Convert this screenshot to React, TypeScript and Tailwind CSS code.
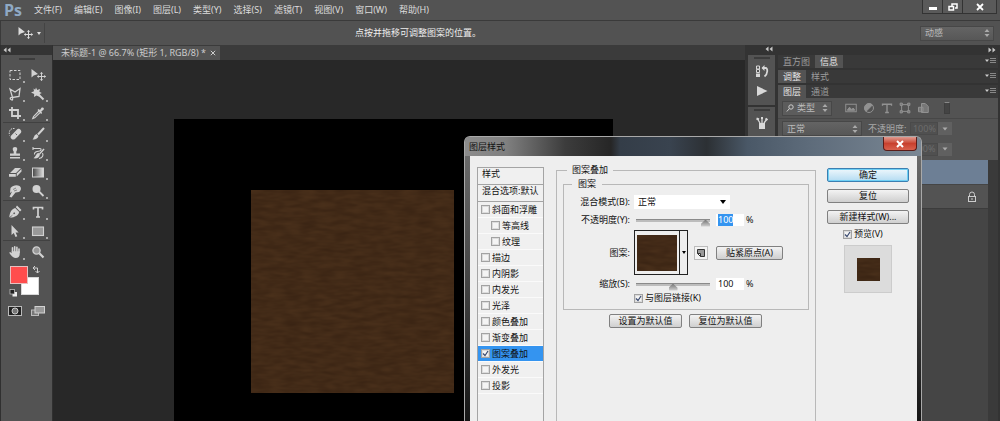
import { useState, type ReactNode } from 'react';
import clsx from 'clsx';

const MENUS = ['文件(F)', '编辑(E)', '图像(I)', '图层(L)', '类型(Y)', '选择(S)', '滤镜(T)', '视图(V)', '窗口(W)', '帮助(H)'];

interface StyleItem {
  label: string;
  child?: boolean;
  active?: boolean;
}

const STYLES: StyleItem[] = [
  { label: '斜面和浮雕' },
  { label: '等高线', child: true },
  { label: '纹理', child: true },
  { label: '描边' },
  { label: '内阴影' },
  { label: '内发光' },
  { label: '光泽' },
  { label: '颜色叠加' },
  { label: '渐变叠加' },
  { label: '图案叠加', active: true },
  { label: '外发光' },
  { label: '投影' },
];

function Svg({ children, className = 'size-4' }: { children: ReactNode; className?: string }) {
  return (
    <svg viewBox="0 0 16 16" className={className} fill="none" stroke="currentColor" strokeWidth="1.3" aria-hidden>
      {children}
    </svg>
  );
}

function MoveIcon() {
  return (
    <Svg>
      <path d="M1.500 2v8.500l2.200-2 4.300-1.500z" fill="currentColor" stroke="none" />
      <path d="M11.500 5.500v8M7.500 9.500h8" strokeWidth="1" />
      <path d="M10.200 6.800l1.300-1.500 1.300 1.500M10.200 12.200l1.300 1.500 1.300-1.500M8.800 8.200L7.300 9.500l1.500 1.300M14.200 8.200l1.500 1.300-1.500 1.300" strokeWidth=".8" />
    </Svg>
  );
}

// Toolbox, two tools per row, split in groups by a thin rule
const TOOL_GROUPS: { name: string; icon: ReactNode }[][] = [
  [
    { name: '矩形选框', icon: <Svg><rect x="3" y="3.500" width="10" height="9" strokeDasharray="2.500 1.500" strokeWidth="1" /></Svg> },
    { name: '移动', icon: <MoveIcon /> },
    {
      name: '多边形套索',
      icon: <Svg><path d="M3 3l5 3 5-3.500-1 8-6.500 1zM5.500 11.500c-2-.5-3 1-1.500 2s2 .5 1.500-2" /></Svg>,
    },
    {
      name: '魔棒',
      icon: (
        <Svg>
          <path d="M6 1.500l1.200 2.500L10 3l-.6 2.800 2.400 1.200-2.500 1.200.2 2.600L6.500 9.500 4 11l.2-3L1 6.500l3-1.200L3.500 2.500l1.700 1.200z" fill="currentColor" stroke="none" />
          <path d="M8 8l5.500 5.500" strokeWidth="2" />
        </Svg>
      ),
    },
    { name: '裁剪', icon: <Svg><path d="M5 2v9h9M2 5h9v9" strokeWidth="1.800" /></Svg> },
    {
      name: '吸管',
      icon: (
        <Svg>
          <path d="M9 6l-5.500 5.500-.8 2 2-.7L10.300 7.300" strokeWidth="1.100" />
          <path d="M7.500 5l1-1 1.500 1 1.700-2.400c1.800-.8 2.800.9 1.800 2.100L11.300 6.500l.8 1.500-1 1z" fill="currentColor" stroke="none" />
        </Svg>
      ),
    },
  ],
  [
    {
      name: '污点修复',
      icon: (
        <Svg>
          <path d="M10 3.500c1.500-2 5.500 1 4 3.300L8 13c-2.500 1.800-5.500-1-4-3.300z" fill="currentColor" stroke="none" />
          <path d="M7.500 2.500C3.500 2 1.500 5 2.500 9.500" strokeDasharray="1.500 1" strokeWidth="1" />
          <path d="M8.500 7.500l1.500 1.500" stroke="#666" strokeWidth="1" />
        </Svg>
      ),
    },
    {
      name: '画笔',
      icon: (
        <Svg>
          <path d="M14 2L8 8.500" strokeWidth="2" />
          <path d="M6.500 8l2 2c-.5 2.500-3 4-6 3.500 1.500-1 1-4 4-5.500z" fill="currentColor" stroke="none" />
        </Svg>
      ),
    },
    {
      name: '仿制图章',
      icon: (
        <Svg>
          <path d="M8 2c3 0 2.500 3 1.300 4.500V8.500H13v2.300H3V8.500h3.700V6.500C5.500 5 5 2 8 2zM3 12h10v1.500H3z" fill="currentColor" stroke="none" />
        </Svg>
      ),
    },
    {
      name: '历史记录画笔',
      icon: (
        <Svg>
          <path d="M3 3.500h7c1.500 0 1.500 2-.5 2.500-3 .5-5.500 1-5 3.500M3 2v3M12.500 8c1 2 .5 5-3.500 5.500" strokeWidth="1.100" />
          <path d="M14 4L9.500 9" strokeWidth="1.500" />
          <path d="M8.300 7.800L10 9.500C9.500 12.500 7 13.800 3.500 13.300 6 11.500 5.800 9 8.300 7.800z" fill="currentColor" stroke="none" />
        </Svg>
      ),
    },
    {
      name: '橡皮擦',
      icon: (
        <Svg>
          <path d="M8 4h6L9 9H3zM9.700 9.600L14.500 5v2.500L9.700 12.500zM2 10h6.800v2.800H2z" fill="currentColor" stroke="none" />
        </Svg>
      ),
    },
    {
      name: '渐变',
      icon: (
        <Svg>
          <defs>
            <linearGradient id="tool-gradient">
              <stop stopColor="#444" />
              <stop offset="1" stopColor="#e0e0e0" />
            </linearGradient>
          </defs>
          <rect x="2.500" y="4" width="11" height="9" fill="url(#tool-gradient)" strokeWidth="1" />
        </Svg>
      ),
    },
    {
      name: '涂抹',
      icon: (
        <Svg>
          <path d="M3.500 5C6 2 10 1.500 12.500 3s1.500 5-.5 6L8.500 9.500 4.500 14.500l-2-.8L5 8.500 3 10z" fill="currentColor" stroke="none" />
          <path d="M6 6.500l3-1.500M7 8l3-1" stroke="#666" strokeWidth=".7" />
        </Svg>
      ),
    },
    {
      name: '减淡',
      icon: <Svg><circle cx="6.500" cy="6" r="4" fill="currentColor" stroke="none" /><path d="M9 8.500l4.500 4.500" strokeWidth="1.800" /></Svg>,
    },
  ],
  [
    {
      name: '钢笔',
      icon: (
        <Svg>
          <path d="M10 1.500l4.500 4.500L13 7.500l-4.200-4.200zM8.200 4l4 4C11.500 11.500 8 13 3 14l3.500-4 .8.300.9-1-.9-1-1 .7.200 1L2.200 13.500C3 8 4.500 5 8.200 4z" fill="currentColor" stroke="none" />
        </Svg>
      ),
    },
    { name: '横排文字', icon: <Svg><path d="M3.500 5.500V3.500h9v2M8 3.500v9.500M6 13h4" strokeWidth="1.700" /></Svg> },
    { name: '路径选择', icon: <Svg><path d="M4.500 2v10l2.300-2 1.700 4 1.800-.8-1.700-3.700h3z" fill="currentColor" stroke="none" /></Svg> },
    { name: '矩形', icon: <Svg><rect x="2.500" y="4" width="11" height="8.500" fill="#999" strokeWidth="1.100" /></Svg> },
  ],
  [
    {
      name: '抓手',
      icon: (
        <Svg>
          <path d="M5.500 8V3.800M7.700 7.500V2.800M9.900 7.500V3.300M12 8.500V5" strokeWidth="1.600" strokeLinecap="round" />
          <path d="M4.700 7.300h8V10c0 2.500-1.500 4-4 4-2.500 0-3.500-1.300-6.500-5.300 1-1 2-.2 2.500.6z" fill="currentColor" stroke="none" />
        </Svg>
      ),
    },
    { name: '缩放', icon: <Svg><circle cx="6.500" cy="6.500" r="3.600" fill="#999" /><path d="M9.300 9.300l4.200 4.200" strokeWidth="2.200" /></Svg> },
  ],
];

function Toolbox() {
  return (
    <aside className="flex w-[53px] shrink-0 flex-col border-x border-[#303030] bg-[#535353] text-[#d2d2d2]">
      <div className="flex h-2.5 shrink-0 items-center bg-[#343434] pl-0.5">
        <Chevrons />
      </div>
      <div className="mx-auto mt-[3px] h-0.5 w-4 shrink-0 bg-[#3c3c3c]" />
      <div className="mt-[5px]" />
      {TOOL_GROUPS.map((group, i) => (
        <div
          key={i}
          className={clsx('mx-0.5 grid grid-cols-2', i > 0 && 'border-t border-[#414141] pt-px')}
        >
          {group.map(tool => (
            <button key={tool.name} title={tool.name} className="relative flex h-[19px] items-center justify-center">
              {tool.icon}
              {tool.name !== '移动' && tool.name !== '缩放' && (
                <span className="absolute right-0.5 bottom-px size-0.5 bg-[#aaa]" />
              )}
            </button>
          ))}
        </div>
      ))}
      <div className="ml-2 mt-1 w-8">
        <svg viewBox="0 0 32 32" className="size-8" aria-hidden>
          <rect x="12.500" y="12.500" width="17" height="17" fill="#fff" stroke="#d8d8d8" />
          <rect x="1.500" y="1.500" width="17" height="17" fill="#ff4d4d" stroke="#e6c0c0" />
          <path d="M24 3h4.500v5M26 1l-2 2 2 2M26.500 6l2 2 2-2" fill="none" stroke="#d0d0d0" />
          <rect x="3.500" y="27" width="4.500" height="4.500" fill="#eee" />
          <rect x="1" y="24.500" width="4.500" height="4.500" fill="#222" stroke="#ccc" strokeWidth=".7" />
        </svg>
      </div>
      <div className="mx-0.5 mt-2 grid grid-cols-2 justify-items-center">
        <button title="以快速蒙版模式编辑">
          <svg viewBox="0 0 14 12" className="h-3 w-3.5">
            <rect x=".5" y="1.500" width="13" height="9" fill="#222" stroke="#bbb" />
            <circle cx="7" cy="6" r="3" fill="#777" stroke="#ccc" />
          </svg>
        </button>
        <button title="更改屏幕模式">
          <svg viewBox="0 0 14 12" className="h-3 w-3.5">
            <rect x=".5" y="5" width="7" height="5.500" fill="#777" stroke="#bbb" />
            <rect x="4" y="1.500" width="9.500" height="6.500" fill="#999" stroke="#d2d2d2" />
          </svg>
        </button>
      </div>
    </aside>
  );
}

function Chevrons({ right }: { right?: boolean }) {
  return (
    <svg viewBox="0 0 8 6" className={clsx('h-1.5 w-2', right && 'rotate-180')} fill="#c8c8c8" aria-hidden>
      <path d="M3.500 .5v5L.5 3zM7.500 .5v5L4.500 3z" />
    </svg>
  );
}

function Spinner() {
  return (
    <svg viewBox="0 0 6 8" className="pointer-events-none absolute right-1 h-2 w-1.5" fill="#aaa" aria-hidden>
      <path d="M3 0l2.500 3h-5zM3 8l2.500-3h-5z" />
    </svg>
  );
}

function DarkSelect({ label, value, className, textClass }: { label: string; value: string; className: string; textClass: string }) {
  return (
    <div className={clsx('relative flex items-center', className)}>
      <select
        aria-label={label}
        className={clsx('size-full appearance-none border border-[#474747] bg-linear-to-b from-[#646464] to-[#575757] text-[#bbb]', textClass)}
      >
        <option>{value}</option>
      </select>
      <Spinner />
    </div>
  );
}

function Leather({ className }: { className: string }) {
  return (
    <svg className={className} aria-hidden>
      <filter id="leather" x="0" y="0" width="100%" height="100%" colorInterpolationFilters="sRGB">
        <feTurbulence type="fractalNoise" baseFrequency=".06 .22" numOctaves="2" seed="4" />
        <feColorMatrix values=".16 0 0 0 .175  .12 0 0 0 .105  .07 0 0 0 .055  0 0 0 0 1" />
      </filter>
      <rect width="100%" height="100%" fill="#442b18" />
      <rect width="100%" height="100%" filter="url(#leather)" opacity=".5" />
    </svg>
  );
}

function PanelTabs({ tabs, active }: { tabs: string[]; active: number }) {
  return (
    <div className="flex h-[13px] shrink-0 bg-[#393939]" role="tablist">
      {tabs.map((tab, i) => (
        <button
          key={tab}
          role="tab"
          aria-selected={i === active}
          className={clsx('px-[5px]', i === active ? 'bg-[#535353] text-[#e4e4e4]' : 'text-[#9c9c9c]')}
        >
          {tab}
        </button>
      ))}
      <svg viewBox="0 0 11 8" className="mt-0.5 mr-0.5 ml-auto h-2 w-[11px]" aria-hidden>
        <path d="M0 2.500h4l-2 2.500z" fill="#ccc" />
        <path d="M5 1.500h6M5 3.500h6M5 5.500h6" stroke="#888" />
      </svg>
    </div>
  );
}

function PercentField({ label }: { label: string }) {
  return (
    <div className="flex h-[13px]">
      <input aria-label={label} disabled defaultValue="100%" className="w-7 border border-[#4a4a4a] bg-[#505050] text-center text-[#6c6c6c]" />
      <button aria-label={label} className="flex w-3.5 items-center justify-center bg-[#606060]">
        <svg viewBox="0 0 6 4" className="h-1 w-1.5" fill="#aaa"><path d="M.5 .5h5L3 3.500z" /></svg>
      </button>
    </div>
  );
}

function Panels() {
  return (
    <aside className="flex w-[255px] shrink-0 bg-[#333] pr-0.5">
      {/* Collapsed icon strip */}
      <div className="mx-[3px] flex w-[27px] shrink-0 flex-col gap-0.5">
        <div className="flex h-2 items-center justify-end pr-0.5">
          <Chevrons />
        </div>
        <div className="flex h-[50px] flex-col items-center gap-1 bg-[#535353] pt-0.5 text-[#d8d8d8]">
          <div className="h-0.5 w-4 bg-[#3c3c3c]" />
          <button aria-label="历史记录" className="h-4">
            <Svg>
              <path d="M2.500 3h3v3h-3zM2.500 6.500h3v3h-3z" strokeWidth="1" />
              <path d="M2 10.500h4V14H2z" fill="currentColor" stroke="none" />
              <path d="M8.500 5h3c2.500 0 2.500 6-1 8.500" strokeWidth="1.800" />
              <path d="M7.500 5l3-3v6z" fill="currentColor" stroke="none" />
            </Svg>
          </button>
          <button aria-label="动作" className="h-4">
            <Svg><path d="M3 3l10.500 5L3 13z" fill="currentColor" stroke="none" /></Svg>
          </button>
        </div>
        <div className="flex flex-1 flex-col items-center gap-1 bg-[#535353] pt-0.5 text-[#d8d8d8]">
          <div className="h-0.5 w-4 bg-[#3c3c3c]" />
          <button aria-label="画笔预设" className="h-4">
            <Svg>
              <path d="M5 8h6v6H5z" fill="currentColor" stroke="none" />
              <path d="M6 8L3.500 4M8 8V2M10 8l3-4" />
              <path d="M2.500 3.500l2.500 1M7 3h2M11.500 3.500l2 1.500" strokeWidth="2" />
            </Svg>
          </button>
        </div>
      </div>

      <div className="flex min-w-0 flex-1 flex-col">
        <div className="flex h-2.5 shrink-0 items-center justify-end pr-0.5">
          <Chevrons right />
        </div>
        <PanelTabs tabs={['直方图', '信息']} active={1} />
        <div className="mt-0.5"><PanelTabs tabs={['调整', '样式']} active={0} /></div>
        <div className="mt-0.5"><PanelTabs tabs={['图层', '通道']} active={0} /></div>
        <div className="flex h-5 shrink-0 items-center gap-[5px] bg-[#535353] pl-1 text-[#929292]">
          <div className="relative flex h-[15px] w-[50px] items-center">
            <select aria-label="筛选" className="size-full appearance-none border border-[#474747] bg-[#5c5c5c] pl-3.5 text-[#bbb]">
              <option>类型</option>
            </select>
            <svg viewBox="0 0 8 8" className="pointer-events-none absolute left-1 size-2" fill="none" stroke="#ccc" aria-hidden>
              <circle cx="5" cy="3" r="2.200" />
              <path d="M3.400 4.600L.8 7.500" />
            </svg>
            <Spinner />
          </div>
          <div className="ml-2 flex items-center gap-1.5">
            <Svg className="size-3"><rect x="1" y="3" width="14" height="10" /><path d="M3 11l3-4 3 3 2-2 2 3z" fill="currentColor" /></Svg>
            <Svg className="size-3"><circle cx="8" cy="8" r="6" /><path d="M4 12.500A6 6 0 0 1 12.500 4z" fill="currentColor" /></Svg>
            <Svg className="size-3"><path d="M2 5V3h12v2M8 3v11M5.500 14h5" strokeWidth="1.800" /></Svg>
            <Svg className="size-3"><path d="M3.500 3.500h9v9h-9z" /><path d="M1.500 1.500h3v3h-3zM11.500 1.500h3v3h-3zM1.500 11.500h3v3h-3zM11.500 11.500h3v3h-3z" fill="#777" /></Svg>
            <Svg className="size-3"><path d="M6 2h5l4 4v8H6zM2 7h6v6H2z" fill="#777" /></Svg>
          </div>
          <div className="ml-2.5 h-3 w-1.5 border border-[#3e3e3e] border-t-[#888] bg-[#444]" />
        </div>
        <div className="flex h-5 shrink-0 items-center border-t border-[#474747] bg-[#535353] pl-1 text-[#a8a8a8]">
          <DarkSelect label="混合模式" value="正常" className="h-[15px] w-20" textClass="pl-1" />
          <span className="mr-1 ml-1.5">不透明度:</span>
          <PercentField label="不透明度" />
        </div>
        <div className="flex h-[22px] shrink-0 items-center bg-[#535353] pl-1 text-[#a8a8a8]">
          <span className="w-[86px]">锁定:</span>
          <span className="mr-1 w-[38px] text-right">填充:</span>
          <PercentField label="填充" />
        </div>
        <div className="flex min-h-0 flex-1 flex-col border-r-[10px] border-[#3a3a3a] bg-[#454545]">
          <div className="h-6 bg-[#6d7f95]" />
          <div className="mt-px flex h-6 items-center justify-end border-b border-[#3c3c3c] bg-[#535353] pr-2.5 text-[#ccc]">
            <svg viewBox="0 0 12 12" className="size-3" fill="none" stroke="currentColor" aria-label="锁定">
              <path d="M3.500 5V3.500a2.500 2.500 0 0 1 5 0V5" />
              <rect x="2.500" y="5.500" width="7" height="5" />
              <path d="M6 7v2" />
            </svg>
          </div>
        </div>
      </div>
    </aside>
  );
}

function Check({ id, checked = false }: { id: string; checked?: boolean }) {
  const [on, setOn] = useState(checked);
  return (
    <span className="relative flex size-[9px] shrink-0">
      <input
        id={id}
        type="checkbox"
        checked={on}
        onChange={e => setOn(e.target.checked)}
        className="size-[9px] appearance-none border border-[#a2a2a2] bg-[#f4f4f4] shadow-[inset_0_0_0_1px_#dcdcdc]"
      />
      {on && (
        <svg viewBox="0 0 9 9" className="pointer-events-none absolute inset-0 size-[9px]" fill="none" stroke="#3a4a70" strokeWidth="1.200" aria-hidden>
          <path d="M2 4.500l2 2 3-4.500" />
        </svg>
      )}
    </span>
  );
}

function PushButton({ children, primary, className }: { children: ReactNode; primary?: boolean; className?: string }) {
  return (
    <button
      className={clsx(
        'h-3.5 rounded-xs border bg-linear-to-b leading-3',
        primary
          ? 'border-[#3c7fb1] from-[#eef7fc] to-[#b4dcf2] shadow-[inset_0_0_0_1px_#6fd0f5]'
          : 'border-[#808080] from-[#f3f3f3] to-[#cfcfcf]',
        className
      )}
    >
      {children}
    </button>
  );
}

function Slider({ id, value }: { id: string; value: number }) {
  return (
    <input
      id={id}
      type="range"
      defaultValue={value}
      className="ml-0.5 h-3 w-[74px] appearance-none bg-transparent [&::-webkit-slider-runnable-track]:h-[3px] [&::-webkit-slider-runnable-track]:border-t [&::-webkit-slider-runnable-track]:border-[#8a8a8a] [&::-webkit-slider-runnable-track]:bg-[#bdbdbd] [&::-webkit-slider-thumb]:h-[7px] [&::-webkit-slider-thumb]:w-[9px] [&::-webkit-slider-thumb]:appearance-none [&::-webkit-slider-thumb]:bg-linear-to-b [&::-webkit-slider-thumb]:from-[#777] [&::-webkit-slider-thumb]:to-[#d8d8d8] [&::-webkit-slider-thumb]:[clip-path:polygon(50%_0,100%_60%,100%_100%,0_100%,0_60%)]"
    />
  );
}

function LayerStyleDialog() {
  return (
    <div
      role="dialog"
      aria-label="图层样式"
      className="absolute top-[136px] left-[464px] flex h-[calc(100%-136px)] w-[458px] flex-col overflow-hidden rounded-t-md border border-b-0 border-[#a9a9a9] bg-linear-to-b from-[#707070] via-[#444] to-[#161616] text-[#111]"
    >
      <div className="flex h-[19px] shrink-0 items-center bg-[linear-gradient(90deg,#8c8c8c_0%,#808080_9%,#3c3c3c_22%,#262626_32%,#343d48_34%,#39434f_45%,#2c3034_53%,#4a5867_62%,#5d6b7a_75%,#7a8794_100%)] pl-1">
        <h2>图层样式</h2>
        <button
          aria-label="关闭"
          className="mr-1 ml-auto flex h-3.5 w-[34px] items-center justify-center self-start rounded-b-sm border border-t-0 border-[#5a1c18] bg-linear-to-b from-[#e09a90] via-[#c8402e] to-[#d8604c]"
        >
          <svg viewBox="0 0 8 8" className="size-2" stroke="#fff" strokeWidth="2" aria-hidden><path d="M1 1l6 6M7 1L1 7" /></svg>
        </button>
      </div>

      <div className="mr-1 ml-[5px] flex min-h-0 flex-1 overflow-hidden bg-[#eee]">
        <ul className="mt-[11px] ml-[7px] w-[67px] shrink-0 border border-b-0 border-[#a4a4a4] bg-[#f0f0f0]">
          <li className="h-[17px] border-b border-[#a4a4a4] pl-1 leading-3">样式</li>
          <li className="h-[17px] border-b border-[#a4a4a4] pl-1 leading-3 whitespace-nowrap">混合选项:默认</li>
          {STYLES.map((item, i) => (
            <li
              key={item.label}
              className={clsx(
                'flex h-4 items-center gap-0.5 border-b border-[#fafafa]',
                item.child ? 'pl-[13px]' : 'pl-[3px]',
                item.active && 'bg-[#3494f0]'
              )}
            >
              <Check id={`style-${i}`} checked={item.active} />
              <label htmlFor={`style-${i}`} className="whitespace-nowrap">{item.label}</label>
            </li>
          ))}
        </ul>

        <fieldset className="mt-[7px] ml-3 h-[400px] w-[260px] shrink-0 border border-[#b8b8b8]">
          <legend className="ml-2.5 px-[5px] leading-[14px]">图案叠加</legend>
          <fieldset className="mx-1.5 h-[133px] border border-[#b8b8b8]">
            <legend className="ml-2 px-1.5 leading-[14px]">图案</legend>
            <div className="mt-0.5 grid grid-cols-[66px_1fr] items-center gap-x-1">
              <label htmlFor="blend" className="text-right">混合模式(B):</label>
              <div className="relative my-0.5 flex w-24 items-center">
                <select id="blend" className="h-3.5 w-full appearance-none bg-white pl-1">
                  <option>正常</option>
                </select>
                <svg viewBox="0 0 6 4" className="pointer-events-none absolute right-1 h-1 w-1.5" aria-hidden><path d="M0 0h6L3 4z" /></svg>
              </div>

              <label htmlFor="opacity" className="text-right">不透明度(Y):</label>
              <div className="flex h-[18px] items-center">
                <Slider id="opacity" value={100} />
                <input
                  aria-label="不透明度"
                  defaultValue="100"
                  autoFocus
                  onFocus={e => e.target.select()}
                  className="ml-1.5 h-3 w-7 bg-white pl-0.5 outline-none selection:bg-[#3494f0] selection:text-white"
                />
                <span className="ml-0.5">%</span>
              </div>

              <span className="text-right">图案:</span>
              <div className="my-px flex items-center">
                <button aria-label="图案" className="flex h-[45px] w-[54px] border border-[#222]">
                  <span className="flex h-full flex-1 items-center justify-center border-r border-[#222]">
                    <Leather className="h-9 w-10" />
                  </span>
                  <span className="flex h-full w-[7px] items-center justify-center">
                    <svg viewBox="0 0 4 3" className="h-[3px] w-1"><path d="M0 0h4L2 3z" /></svg>
                  </span>
                </button>
                <button aria-label="新建预设" className="ml-1.5 flex size-3.5 items-center justify-center border border-[#bbb] bg-[#f4f4f4]">
                  <svg viewBox="0 0 10 10" className="size-2.5" fill="none" stroke="#333"><path d="M1.500 1.500h7v7h-4v-3h-3z" fill="#999" /><path d="M1.500 5.500l3 3" /></svg>
                </button>
                <PushButton className="ml-2 w-[67px]">贴紧原点(A)</PushButton>
              </div>

              <label htmlFor="scale" className="text-right">缩放(S):</label>
              <div className="flex h-4 items-center">
                <Slider id="scale" value={50} />
                <input aria-label="缩放" defaultValue="100" className="ml-1.5 h-3 w-7 bg-white pl-0.5" />
                <span className="ml-0.5">%</span>
              </div>

              <div className="col-start-2 flex h-3 items-center gap-0.5">
                <Check id="link" checked />
                <label htmlFor="link">与图层链接(K)</label>
              </div>
            </div>
          </fieldset>
          <div className="mt-1 ml-[52px] flex gap-[7px]">
            <PushButton className="w-[73px]">设置为默认值</PushButton>
            <PushButton className="w-[73px]">复位为默认值</PushButton>
          </div>
        </fieldset>

        <div className="mt-3 ml-[11px] flex w-[82px] flex-col gap-[7px]">
          <PushButton primary>确定</PushButton>
          <PushButton>复位</PushButton>
          <PushButton>新建样式(W)...</PushButton>
          <div className="flex flex-col items-center gap-1">
            <div className="-mt-1 flex h-3.5 items-center gap-0.5 self-start pl-4">
              <Check id="preview" checked />
              <label htmlFor="preview">预览(V)</label>
            </div>
            <div className="flex size-12 items-center justify-center border border-[#ccc] bg-[#dcdcdc]">
              <Leather className="size-[23px]" />
            </div>
          </div>
        </div>
      </div>
    </div>
  );
}

export default function App() {
  return (
    <div className="relative flex h-screen flex-col overflow-hidden bg-[#535353] font-['Noto_Sans','Noto_Sans_CJK_SC',sans-serif] text-[9px] leading-3 text-[#dcdcdc]">
      {/* Menu bar */}
      <header className="flex h-[21px] shrink-0 border-b border-[#3a3a3a] pl-1">
        <span className="w-[30px] font-['Open_Sans','Noto_Sans',sans-serif] text-base leading-5 font-bold text-[#8fa9c4]">Ps</span>
        <nav className="flex items-center gap-3">
          {MENUS.map(menu => (
            <button key={menu}>{menu}</button>
          ))}
        </nav>
        <div className="mr-[3px] ml-auto flex h-3.5 text-white">
          <button aria-label="最小化" className="flex w-[21px] items-center justify-center border border-t-0 border-[#333] bg-[#5a5a5a]">
            <svg viewBox="0 0 8 8" className="size-2"><path d="M0 4h8v3H0z" fill="#fff" /></svg>
          </button>
          <button aria-label="还原" className="flex w-5 items-center justify-center border border-t-0 border-l-0 border-[#333] bg-[#5a5a5a]">
            <svg viewBox="0 0 10 8" className="h-2 w-2.5" fill="none" stroke="#fff" strokeWidth="1.500"><path d="M4 3V1h5v4H7M1 3.500h4.500v3.500H1z" /></svg>
          </button>
          <button aria-label="关闭窗口" className="flex w-[34px] items-center justify-center border border-t-0 border-l-0 border-[#333] bg-[#5a5a5a]">
            <svg viewBox="0 0 8 8" className="size-2" stroke="#fff" strokeWidth="1.800"><path d="M1 1l6 6M7 1L1 7" /></svg>
          </button>
        </div>
      </header>

      {/* Options bar */}
      <div className="flex h-6 shrink-0 items-center border-l border-[#3a3a3a] bg-[#525252]">
        <div className="flex h-5 w-11 items-center gap-1 border-r border-[#444] pl-4">
          <MoveIcon />
          <svg viewBox="0 0 4 3" className="h-[3px] w-1 shrink-0" fill="#ddd" aria-hidden><path d="M0 0h4L2 3z" /></svg>
        </div>
        <p className="ml-[310px] text-[#eee]">点按并拖移可调整图案的位置。</p>
        <DarkSelect label="工作区" value="动感" className="mr-1.5 ml-auto h-[15px] w-[74px]" textClass="pl-1" />
      </div>

      <div className="flex min-h-0 flex-1">
        <Toolbox />

        <main className="flex min-w-0 flex-1 flex-col bg-[#282828]">
          <div className="flex h-[15px] shrink-0 bg-[#3b3b3b] pt-px">
            <div className="flex items-center gap-1 bg-[#535353] pr-1 pl-2 text-[#ccc]">
              <span>未标题-1 @ 66.7% (矩形 1, RGB/8) *</span>
              <button aria-label="关闭文档">
                <svg viewBox="0 0 6 6" className="size-1.5" stroke="#ccc" aria-hidden><path d="M.8 .8l4.400 4.400M5.200 .8L.8 5.200" /></svg>
              </button>
            </div>
          </div>
          <div className="min-h-0 flex-1 overflow-hidden pt-[59px] pl-[121px]">
            <div className="h-[400px] w-[439px] bg-black pt-[71px] pl-[77px]">
              <Leather className="h-[203px] w-[203px]" />
            </div>
          </div>
        </main>

        <Panels />
      </div>

      <LayerStyleDialog />
    </div>
  );
}
